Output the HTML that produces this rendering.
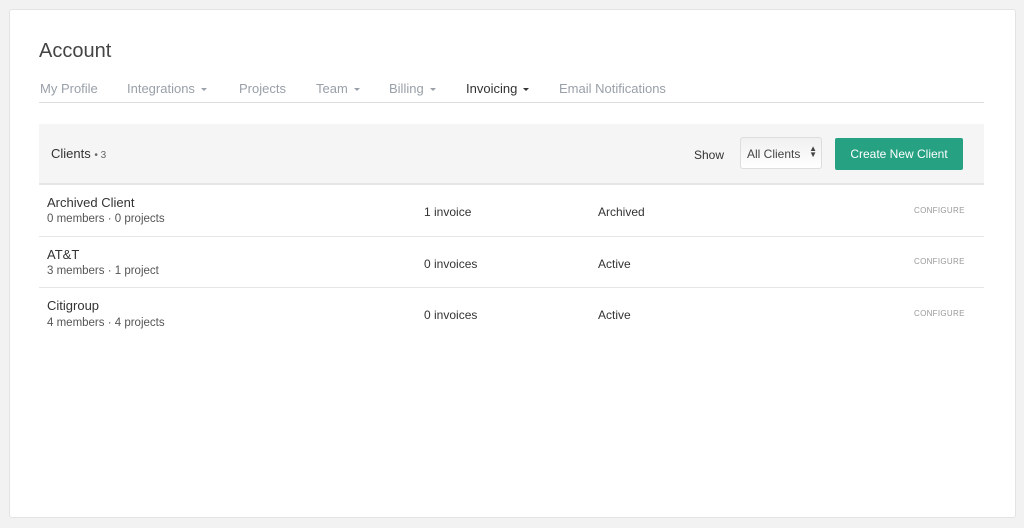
<!DOCTYPE html>
<html><head><meta charset="utf-8"><style>
body{margin:0;width:1024px;height:528px;background:#f2f2f2;font-family:"Liberation Sans",sans-serif;position:relative;overflow:hidden}
.card{position:absolute;left:9px;top:9px;width:1005px;height:507px;background:#fff;border:1px solid #e3e3e3;border-radius:3px}
.abs{position:absolute;white-space:nowrap}
h1{position:absolute;left:39px;top:40px;margin:0;font-weight:normal;font-size:20px;color:#444}
.tab{top:81px;font-size:13px;color:#99a0a8}
.car{display:inline-block;border-left:3px solid transparent;border-right:3px solid transparent;border-top:3px solid currentColor;vertical-align:middle;margin-left:6px}
.line{position:absolute;left:39px;width:945px;height:1px;background:#e5e5e5}
.name{font-size:13px;color:#333}
.sub{font-size:11.5px;color:#555}
.mid{font-size:12px;color:#333}
.cfg{font-size:8px;color:#999;letter-spacing:.3px}
</style></head><body>
<div class="card"></div>
<h1>Account</h1>
<div class="abs tab" style="left:40px">My Profile</div>
<div class="abs tab" style="left:127px">Integrations<span class="car"></span></div>
<div class="abs tab" style="left:239px">Projects</div>
<div class="abs tab" style="left:316px">Team<span class="car"></span></div>
<div class="abs tab" style="left:389px">Billing<span class="car"></span></div>
<div class="abs tab" style="left:466px;color:#333">Invoicing<span class="car"></span></div>
<div class="abs tab" style="left:559px">Email Notifications</div>
<div class="line" style="top:102px;background:#ddd"></div>
<div class="abs" style="left:39px;top:124px;width:945px;height:59px;background:#f5f5f5;border-bottom:2px solid #e6e6e6"></div>
<div class="abs" style="left:51px;top:146px;font-size:13px;color:#333">Clients <span style="font-size:10px;color:#666">• 3</span></div>
<div class="abs" style="left:694px;top:148px;font-size:12px;color:#333">Show</div>
<div class="abs" style="left:740px;top:137px;width:82px;height:32px;border:1px solid #ddd;border-radius:3px;background:linear-gradient(#f0f0f0,#fff);box-sizing:border-box;font-size:12px;color:#444;padding:9px 0 0 6px">All Clients <span style="position:absolute;right:4px;top:8px;font-size:8px;line-height:6px">▲<br>▼</span></div>
<div class="abs" style="left:835px;top:138px;width:128px;height:32px;background:#26a182;border-radius:2px;color:#fff;font-size:12px;text-align:center;line-height:32px">Create New Client</div>

<div class="abs name" style="left:47px;top:195px">Archived Client</div>
<div class="abs sub" style="left:47px;top:213px">0 members · 0 projects</div>
<div class="abs mid" style="left:424px;top:205px">1 invoice</div>
<div class="abs mid" style="left:598px;top:205px">Archived</div>
<div class="abs cfg" style="left:914px;top:206px">CONFIGURE</div>
<div class="line" style="top:236px"></div>

<div class="abs name" style="left:47px;top:247px">AT&amp;T</div>
<div class="abs sub" style="left:47px;top:265px">3 members · 1 project</div>
<div class="abs mid" style="left:424px;top:257px">0 invoices</div>
<div class="abs mid" style="left:598px;top:257px">Active</div>
<div class="abs cfg" style="left:914px;top:257px">CONFIGURE</div>
<div class="line" style="top:287px"></div>

<div class="abs name" style="left:47px;top:298px">Citigroup</div>
<div class="abs sub" style="left:47px;top:317px">4 members · 4 projects</div>
<div class="abs mid" style="left:424px;top:308px">0 invoices</div>
<div class="abs mid" style="left:598px;top:308px">Active</div>
<div class="abs cfg" style="left:914px;top:309px">CONFIGURE</div>
</body></html>
